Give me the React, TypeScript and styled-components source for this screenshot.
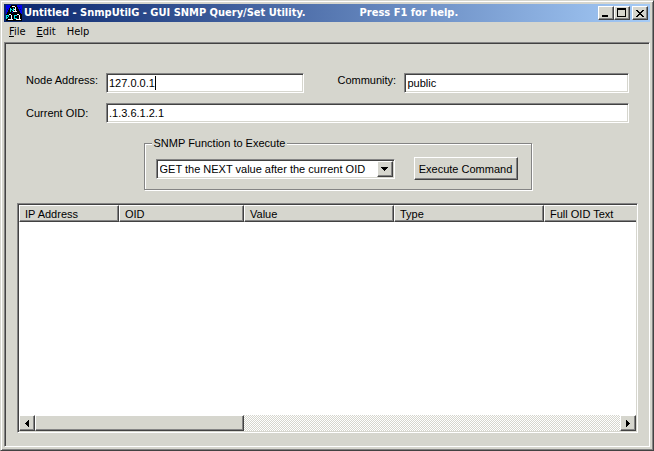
import React, { useState } from 'react';
import styled, { createGlobalStyle, css } from 'styled-components';

const face = '#d6d6ce';
const grey = '#848484';
const dark = '#424242';
const white = '#ffffff';

const GlobalStyle = createGlobalStyle`
  *, *::before, *::after { box-sizing: border-box; }
  body {
    margin: 0;
    background: ${face};
    color: #000;
    font-family: 'Liberation Sans', Arial, sans-serif;
    font-size: 11px;
    line-height: 14px;
  }
  button, input, select { font: inherit; color: inherit; margin: 0; border-radius: 0; }
`;

const sunken = css`
  border: 1px solid;
  border-color: ${grey} ${white} ${white} ${grey};
  box-shadow: inset 1px 1px 0 ${dark}, inset -1px -1px 0 ${face};
`;

const raised = css`
  border: 1px solid;
  border-color: ${white} ${dark} ${dark} ${white};
  box-shadow: inset -1px -1px 0 ${grey};
  background-color: ${face};
`;

const Window = styled.div`
  display: flex;
  flex-direction: column;
  min-height: 100vh;
  padding: 3px;
  background: ${face};
  border: 1px solid;
  border-color: ${face} ${dark} ${dark} ${face};
  box-shadow: inset 1px 1px 0 ${white}, inset -1px -1px 0 ${grey};
`;

const TitleBar = styled.header`
  display: flex;
  align-items: center;
  height: 18px;
  padding: 0 2px;
  color: ${white};
  background: linear-gradient(90deg, #08246b, #a5cbf7);
`;

const AppIcon = styled.svg`
  flex: none;
  width: 16px;
  height: 16px;
`;

const Title = styled.h1`
  display: flex;
  flex: 1;
  gap: 54px;
  margin: 0 0 0 2px;
  font: bold 11px/18px 'DejaVu Sans Condensed', 'DejaVu Sans', sans-serif;
  white-space: nowrap;
  overflow: hidden;
`;

const CaptionButton = styled.button<{ $apart?: boolean }>`
  ${raised}
  display: flex;
  align-items: center;
  justify-content: center;
  flex: none;
  width: 16px;
  height: 14px;
  padding: 0;
  margin-left: ${p => (p.$apart ? 2 : 0)}px;
`;

const MenuBar = styled.nav`
  display: flex;
  height: 20px;
  padding-left: 5px;
  gap: 11px;
  font: 11px/20px 'DejaVu Sans Condensed', 'DejaVu Sans', sans-serif;
`;

const MenuButton = styled.button`
  padding: 0;
  border: 0;
  background: none;
`;

const Client = styled.main`
  ${sunken}
  display: flex;
  flex: 1;
  flex-direction: column;
  padding: 30px 11px 13px 12px;
`;

const Fields = styled.form`
  display: grid;
  grid-template-columns: 80px minmax(0, 198fr) 100px minmax(0, 224fr);
  row-gap: 10px;
  padding: 0 9px 0 9px;
`;

const Label = styled.label<{ $second?: boolean; $low?: boolean }>`
  padding-left: ${p => (p.$second ? 33 : 0)}px;
  padding-top: ${p => (p.$low ? 3 : 0)}px;
  white-space: nowrap;
`;

const TextBox = styled.div<{ $wide?: boolean }>`
  ${sunken}
  position: relative;
  height: 20px;
  background: ${white};
  grid-column: ${p => (p.$wide ? '2 / -1' : 'auto')};
`;

const TextInput = styled.input`
  display: block;
  width: 100%;
  height: 18px;
  padding: 0 2px;
  border: 0;
  outline: 0;
  background: transparent;
`;

const Caret = styled.span`
  position: absolute;
  inset: 2px auto 2px 2px;
  border-right: 1px solid #000;
  color: transparent;
  white-space: pre;
  pointer-events: none;
`;

const FunctionRow = styled.div`
  display: flex;
  justify-content: center;
  padding: 13px 0 0 20px;
`;

const Group = styled.fieldset`
  display: flex;
  gap: 19px;
  margin: 0;
  padding: 7px 13px 9px 11px;
  border: 1px solid ${grey};
  box-shadow: 1px 1px 0 ${white}, inset 1px 1px 0 ${white};
`;

const Legend = styled.legend`
  margin-left: -4px;
  padding: 0 2px;
  background: ${face};
`;

const SelectBox = styled.div`
  ${sunken}
  position: relative;
  width: 239px;
  height: 20px;
  margin-top: 2px;
  background: ${white};
`;

const Select = styled.select`
  appearance: none;
  display: block;
  width: 100%;
  height: 18px;
  padding: 0 18px 0 3px;
  border: 0;
  outline: 0;
  background: transparent;
`;

const DropArrow = styled.span`
  ${raised}
  position: absolute;
  inset: 1px 1px 1px auto;
  display: flex;
  align-items: center;
  justify-content: center;
  width: 16px;
  pointer-events: none;
`;

const CommandButton = styled.button`
  ${raised}
  width: 104px;
  height: 23px;
  padding: 0;
  white-space: nowrap;
`;

const ListView = styled.section`
  ${sunken}
  display: flex;
  flex: 1;
  flex-direction: column;
  min-height: 120px;
  margin-top: 13px;
  padding: 1px;
  background: ${white};
`;

const ListBody = styled.div`
  flex: 1;
  overflow: hidden;
`;

const Table = styled.table`
  width: 100%;
  table-layout: fixed;
  border-collapse: separate;
  border-spacing: 0;
`;

const Column = styled.th<{ $width?: number }>`
  ${raised}
  width: ${p => (p.$width ? `${p.$width}px` : 'auto')};
  height: 17px;
  padding: 1px 0 0 5px;
  font-weight: normal;
  text-align: left;
  white-space: nowrap;
  &:last-child { border-right: 0; box-shadow: inset 0 -1px 0 ${grey}; }
`;

const ScrollBar = styled.div`
  display: flex;
  height: 16px;
  background: repeating-conic-gradient(${face} 0 25%, ${white} 0 50%) 0 0 / 2px 2px;
`;

const ScrollArrow = styled.button`
  ${raised}
  display: flex;
  align-items: center;
  justify-content: center;
  flex: none;
  width: 16px;
  padding: 0;
`;

const ScrollTrack = styled.div`
  display: grid;
  flex: 1;
  grid-template-columns: 209fr 376fr;
`;

const ScrollThumb = styled.div`
  ${raised}
  height: 16px;
`;

const Glyph = ({ d, w, h }: { d: string; w: number; h: number }) => (
  <svg width={w} height={h} viewBox={`0 0 ${w} ${h}`} shapeRendering="crispEdges" aria-hidden="true">
    <path d={d} fill="#000" />
  </svg>
);

const columns = [
  { name: 'IP Address', width: 100 },
  { name: 'OID', width: 125 },
  { name: 'Value', width: 150 },
  { name: 'Type', width: 150 },
  { name: 'Full OID Text' },
];

export default function App() {
  const [node, setNode] = useState('127.0.0.1');
  const [community, setCommunity] = useState('public');
  const [oid, setOid] = useState('.1.3.6.1.2.1');

  return (
    <>
      <GlobalStyle />
      <Window>
        <TitleBar>
          <AppIcon viewBox="0 0 16 16" shapeRendering="crispEdges" aria-hidden="true">
            <path fill="#000" d="M0 0h16v16H0z" />
            <path fill="#0000f0" d="M0 0h5v1H4v2H3v2H2v2H1v2H0zM11 0h5v9h-1V8h-1V6h-1V4h-1V2h-1zM6 7h1v1H6z" />
            <path fill="#000084" d="M1 4h1v1H1zM13 2h1v1h-1zM14 4h1v1h-1z" />
            <path fill="#fff" d="M6 1h3v1H6zM9 2h1v5H9zM8 4h1v1H8zM7 6h4v1H7zM3 9h2v1H3zM5 10h1v4H5zM2 14h5v1H2zM11 9h2v1h-2zM13 10h1v4h-1zM10 14h5v1h-5z" />
            <path fill="#00e8e8" d="M4 3h1v4H4zM5 4h1v1H5zM6 5h1v1H6zM7 3h1v3H7zM0 10h3v1H0zM0 11h1v3H0zM2 11h1v1H2zM1 12h1v1H1zM8 10h3v1H8zM8 11h1v2H8zM8 13h3v1H8z" />
          </AppIcon>
          <Title>
            <span>Untitled - SnmpUtilG - GUI SNMP Query/Set Utility.</span>
            <span>Press F1 for help.</span>
          </Title>
          <CaptionButton aria-label="Minimize"><Glyph w={10} h={10} d="M1 7h6v2H1z" /></CaptionButton>
          <CaptionButton aria-label="Maximize"><Glyph w={10} h={10} d="M0 0h9v9H0zM1 2v6h7V2z" /></CaptionButton>
          <CaptionButton $apart aria-label="Close">
            <Glyph w={8} h={7} d="M0 0h2v1h1v1h2V1h1V0h2v1H7v1H6v1H5v1h1v1h1v1h1v1H6V6H5V5H3v1H2v1H0V6h1V5h1V4h1V3H2V2H1V1H0z" />
          </CaptionButton>
        </TitleBar>
        <MenuBar>
          <MenuButton><u>F</u>ile</MenuButton>
          <MenuButton><u>E</u>dit</MenuButton>
          <MenuButton>Help</MenuButton>
        </MenuBar>
        <Client>
          <Fields onSubmit={e => e.preventDefault()}>
            <Label htmlFor="node">Node Address:</Label>
            <TextBox>
              <TextInput id="node" value={node} onChange={e => setNode(e.target.value)} />
              <Caret aria-hidden="true">{node}</Caret>
            </TextBox>
            <Label $second htmlFor="community">Community:</Label>
            <TextBox>
              <TextInput id="community" value={community} onChange={e => setCommunity(e.target.value)} />
            </TextBox>
            <Label $low htmlFor="oid">Current OID:</Label>
            <TextBox $wide>
              <TextInput id="oid" value={oid} onChange={e => setOid(e.target.value)} />
            </TextBox>
          </Fields>
          <FunctionRow>
            <Group>
              <Legend>SNMP Function to Execute</Legend>
              <SelectBox>
                <Select aria-label="SNMP Function to Execute">
                  <option>GET the NEXT value after the current OID</option>
                </Select>
                <DropArrow><Glyph w={7} h={4} d="M0 0h7v1H6v1H5v1H4v1H3V3H2V2H1V1H0z" /></DropArrow>
              </SelectBox>
              <CommandButton>Execute Command</CommandButton>
            </Group>
          </FunctionRow>
          <ListView>
            <ListBody>
              <Table>
                <thead>
                  <tr>
                    {columns.map(c => <Column key={c.name} scope="col" $width={c.width}>{c.name}</Column>)}
                  </tr>
                </thead>
                <tbody />
              </Table>
            </ListBody>
            <ScrollBar>
              <ScrollArrow aria-label="Scroll left"><Glyph w={4} h={7} d="M4 0v7H3V6H2V5H1V4H0V3h1V2h1V1h1V0z" /></ScrollArrow>
              <ScrollTrack><ScrollThumb /></ScrollTrack>
              <ScrollArrow aria-label="Scroll right"><Glyph w={4} h={7} d="M0 0v7h1V6h1V5h1V4h1V3H3V2H2V1H1V0z" /></ScrollArrow>
            </ScrollBar>
          </ListView>
        </Client>
      </Window>
    </>
  );
}
